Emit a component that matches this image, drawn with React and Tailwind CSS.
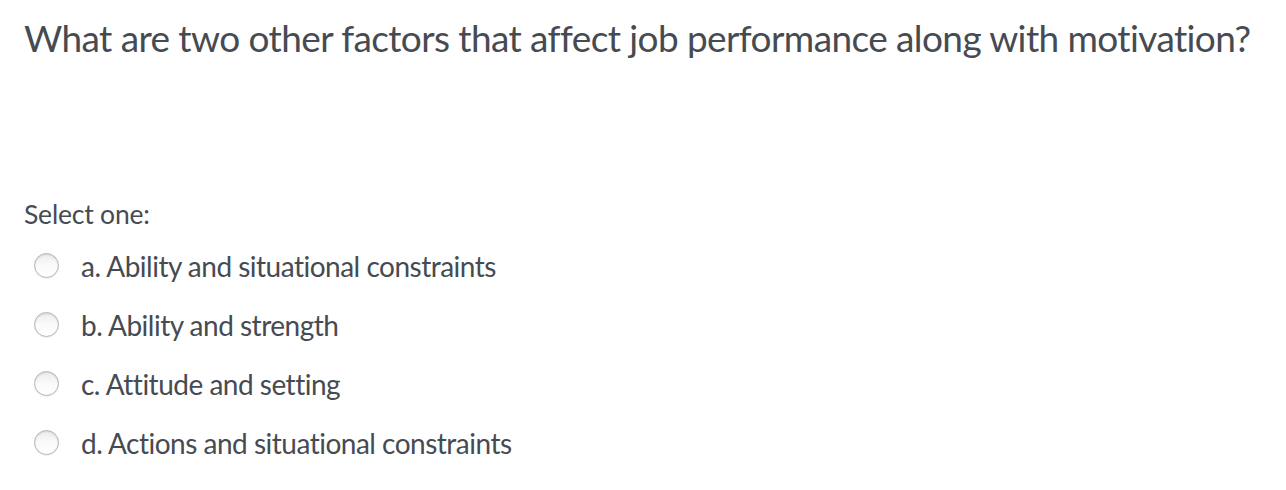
const options = [
  "a. Ability and situational constraints",
  "b. Ability and strength",
  "c. Attitude and setting",
  "d. Actions and situational constraints",
];

function Radio() {
  return (
    <span className="inline-block w-[25px] h-[25px] rounded-full border border-[#b4b4b4] bg-gradient-to-b from-[#ececec] via-[#fafafa] to-white shadow-[inset_0_1px_2px_rgba(0,0,0,0.1),0_1px_1px_rgba(0,0,0,0.06)] shrink-0" />
  );
}

export default function App() {
  return (
    <div className="w-[1286px] h-[490px] bg-white text-[#464b52] font-['Lato','Open_Sans',sans-serif] pl-[24px] pt-[14px]">
      <h2 className="text-[37px] leading-[48px] tracking-[-0.6px]">
        What are two other factors that affect job performance along with motivation?
      </h2>
      <div className="mt-[136px] text-[26.5px] leading-[32px] tracking-[-0.2px]">Select one:</div>
      <div className="flex flex-col mt-[6px]">
        {options.map((o) => (
          <label key={o} className="flex items-center h-[59px]">
            <span className="w-[57px] pl-[10px] flex items-center">
              <Radio />
            </span>
            <span className="text-[28px] tracking-[-0.5px]">{o}</span>
          </label>
        ))}
      </div>
    </div>
  );
}
